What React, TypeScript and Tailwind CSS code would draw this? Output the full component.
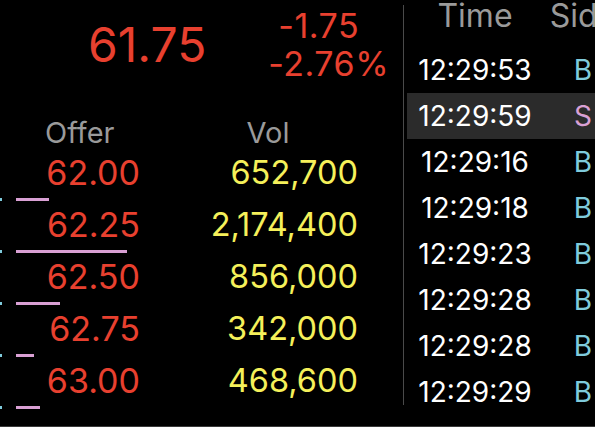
const offers = [
  { price: '62.00', vol: '652,700', bar: 33 },
  { price: '62.25', vol: '2,174,400', bar: 111 },
  { price: '62.50', vol: '856,000', bar: 44 },
  { price: '62.75', vol: '342,000', bar: 18 },
  { price: '63.00', vol: '468,600', bar: 24 },
]

const trades = [
  { time: '12:29:53', side: 'B' },
  { time: '12:29:59', side: 'S' },
  { time: '12:29:16', side: 'B' },
  { time: '12:29:18', side: 'B' },
  { time: '12:29:23', side: 'B' },
  { time: '12:29:28', side: 'B' },
  { time: '12:29:28', side: 'B' },
  { time: '12:29:29', side: 'B' },
]

export default function App() {
  return (
    <div className="w-[595px] h-[427px] overflow-hidden bg-black whitespace-nowrap font-['Inter','Liberation_Sans',sans-serif] border-b border-[#3a3a3a]">
      <div className="flex h-[426px]">
        {/* Quote + offer book */}
        <div className="w-[403px] shrink-0 flex flex-col">
          <div className="h-[118px] flex">
            <div className="ml-[88px] mt-[21px] text-[48px] leading-[48px] text-[#e8402f]">61.75</div>
            <div className="ml-[62px] mt-[7px] flex flex-col text-[34px] leading-[38px] tracking-[0.5px] text-[#e8402f]">
              <span className="ml-[10px]">-1.75</span>
              <span>-2.76%</span>
            </div>
          </div>

          <div className="h-[35px] flex text-[29px] leading-[29px] text-[#9a9a9a]">
            <span className="ml-[45px]">Offer</span>
            <span className="ml-[132px]">Vol</span>
          </div>

          {offers.map((o) => (
            <div key={o.price} className="h-[52px] flex flex-col">
              <div className="h-[40px] flex items-center leading-[40px]">
                <span className="w-[140px] text-right text-[34px] text-[#e8402f]">{o.price}</span>
                <span className="w-[218px] text-right text-[32.5px] text-[#f5f05a]">{o.vol}</span>
              </div>
              <div className="mt-[5px] h-[3px] flex">
                <div className="w-[2px] bg-[#7fcbdc]" />
                <div className="ml-[14px] bg-[#d9a0d4]" style={{ width: o.bar }} />
              </div>
            </div>
          ))}
        </div>

        {/* Divider */}
        <div className="w-px shrink-0 mt-[5px] h-[400px] bg-[#4a4a4a]" />

        {/* Trade ticker */}
        <div className="shrink-0 w-[219px] pl-[3px] flex flex-col">
          <div className="h-[47px] flex text-[32px] leading-[32px] text-[#9a9a9a]">
            <span className="w-[136px] text-center">Time</span>
            <span className="w-[80px] text-center">Side</span>
          </div>
          {trades.map((t, i) => (
            <div
              key={i}
              className={`h-[46px] flex items-center text-[28px] leading-[46px] ${i === 1 ? 'bg-[#2b2b2b]' : ''}`}
            >
              <span className="w-[136px] text-center text-white">{t.time}</span>
              <span className={`w-[80px] text-center ${t.side === 'S' ? 'text-[#d9a0d4]' : 'text-[#7fcbdc]'}`}>
                {t.side}
              </span>
            </div>
          ))}
        </div>
      </div>
    </div>
  )
}
